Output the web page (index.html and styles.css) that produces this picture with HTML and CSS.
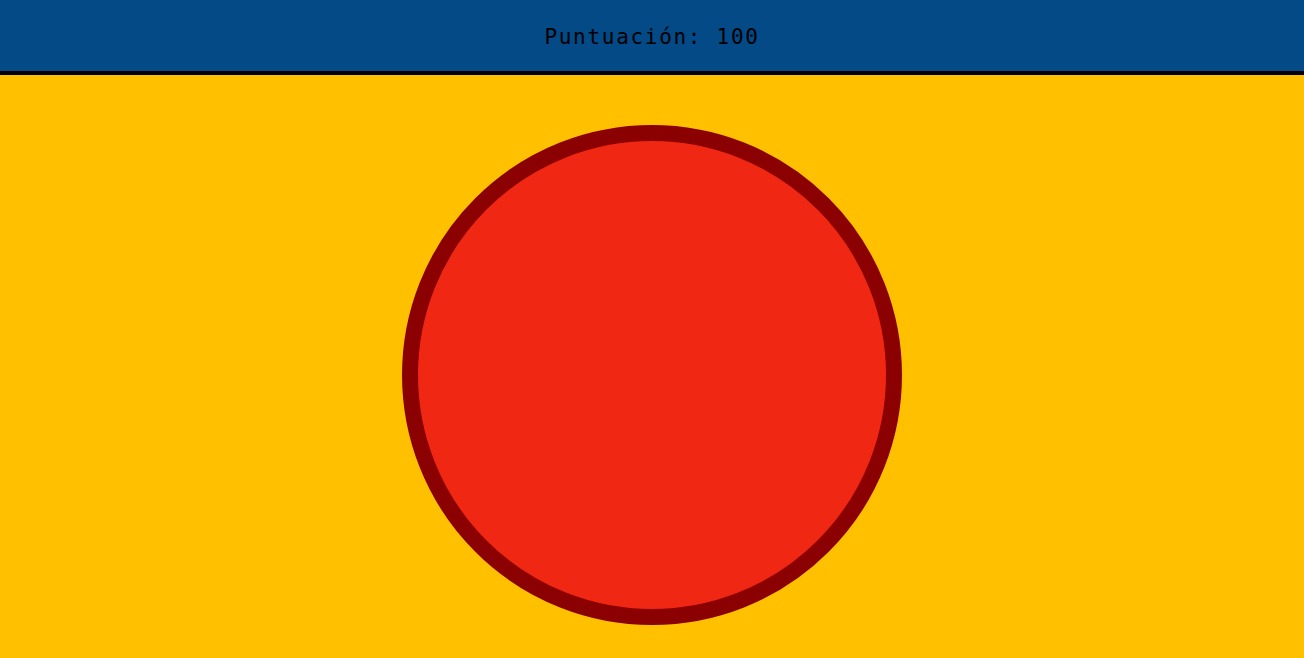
FILE: index.html
```html
<!DOCTYPE html>
<html lang="es">
<head>
<meta charset="utf-8">
<title>Juego</title>
<link rel="stylesheet" href="styles.css">
</head>
<body>
<header class="topbar">
  <span class="score">Puntuación: 100</span>
</header>
<main class="field">
  <div class="target"></div>
</main>
</body>
</html>
```
FILE: styles.css
```css
html, body {
  margin: 0;
  padding: 0;
  height: 100%;
}
body {
  background: #ffc000;
  overflow: hidden;
}
.topbar {
  height: 71px;
  background: #034a87;
  border-bottom: 4px solid #000;
  display: flex;
  align-items: center;
  justify-content: center;
}
.score {
  font-family: "DejaVu Sans Mono", "Liberation Mono", monospace;
  font-size: 21px;
  letter-spacing: 1.7px;
  color: #000;
  padding-top: 3px;
}
.field {
  display: flex;
  justify-content: center;
  padding-top: 50px;
}
.target {
  width: 500px;
  height: 500px;
  box-sizing: border-box;
  border-radius: 50%;
  background: #f02712;
  border: 16px solid #8b0000;
}
```
